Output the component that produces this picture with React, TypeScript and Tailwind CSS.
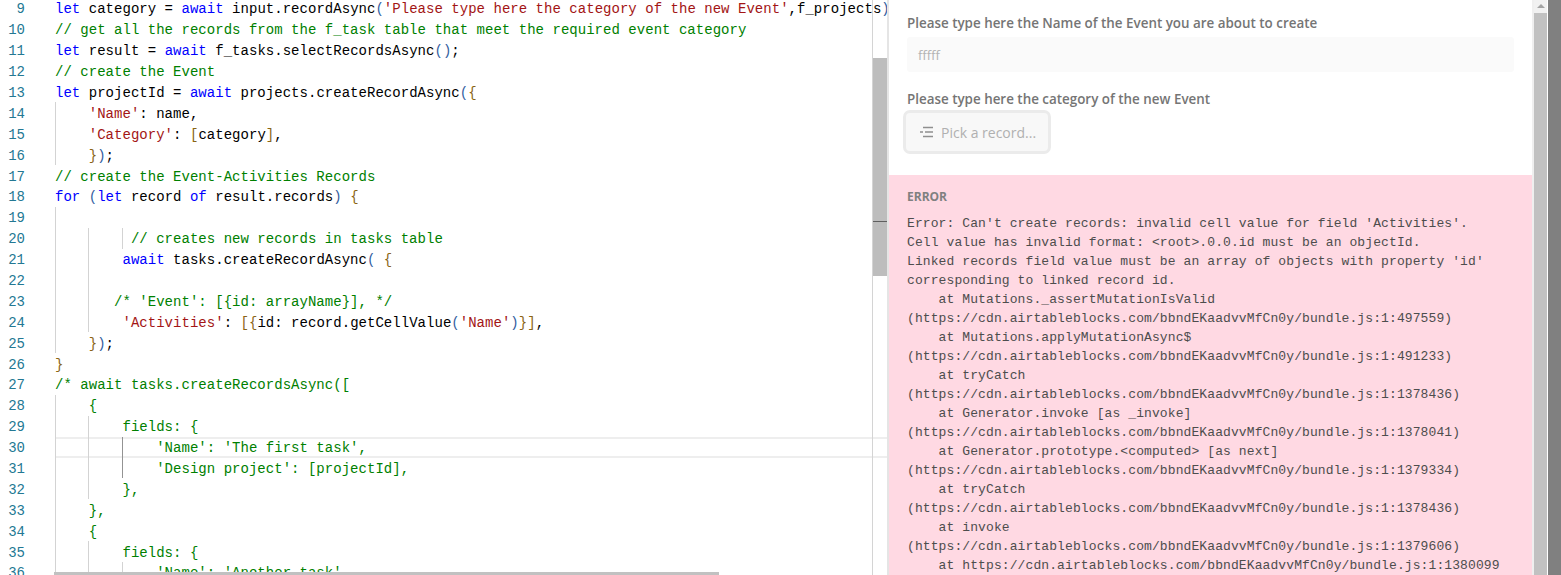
type Tok = [string, string];
type Row = { n: number; t: Tok[]; g?: string[] };

const colors: Record<string, string> = {
  k: "text-[#0000ff]",
  c: "text-[#008000]",
  s: "text-[#a31515]",
  x: "text-[#000000]",
  b: "text-[#8a6414]",
  p: "text-[#33609f]",
};

const guides: Record<string, string> = {
  a: "left-[55px] bg-[#d3d3d3]",
  b: "left-[88px] bg-[#d3d3d3]",
  c: "left-[122px] bg-[#d3d3d3]",
  d: "left-[122px] bg-[#939393]",
};

const rows: Row[] = [
  { n: 9, t: [["k", "let"], ["x", " category = "], ["k", "await"], ["x", " input.recordAsync"], ["p", "("], ["s", "'Please type here the category of the new Event'"], ["x", ",f_projects"], ["p", ")"]] },
  { n: 10, t: [["c", "// get all the records from the f_task table that meet the required event category"]] },
  { n: 11, t: [["k", "let"], ["x", " result = "], ["k", "await"], ["x", " f_tasks.selectRecordsAsync"], ["p", "("], ["p", ")"], ["x", ";"]] },
  { n: 12, t: [["c", "// create the Event"]] },
  { n: 13, t: [["k", "let"], ["x", " projectId = "], ["k", "await"], ["x", " projects.createRecordAsync"], ["p", "("], ["b", "{"]] },
  { n: 14, g: ["a"], t: [["x", "    "], ["s", "'Name'"], ["x", ": name,"]] },
  { n: 15, g: ["a"], t: [["x", "    "], ["s", "'Category'"], ["x", ": "], ["b", "["], ["x", "category"], ["b", "]"], ["x", ","]] },
  { n: 16, g: ["a"], t: [["x", "    "], ["b", "}"], ["p", ")"], ["x", ";"]] },
  { n: 17, t: [["c", "// create the Event-Activities Records"]] },
  { n: 18, t: [["k", "for"], ["x", " "], ["p", "("], ["k", "let"], ["x", " record "], ["k", "of"], ["x", " result.records"], ["p", ")"], ["x", " "], ["b", "{"]] },
  { n: 19, g: ["a"], t: [["x", " "]] },
  { n: 20, g: ["a", "b", "c"], t: [["c", "         // creates new records in tasks table"]] },
  { n: 21, g: ["a", "b"], t: [["x", "        "], ["k", "await"], ["x", " tasks.createRecordAsync"], ["p", "("], ["x", " "], ["b", "{"]] },
  { n: 22, g: ["a", "b"], t: [["x", " "]] },
  { n: 23, g: ["a", "b"], t: [["c", "       /* 'Event': [{id: arrayName}], */"]] },
  { n: 24, g: ["a", "b"], t: [["x", "        "], ["s", "'Activities'"], ["x", ": "], ["b", "[{"], ["x", "id: record.getCellValue"], ["p", "("], ["s", "'Name'"], ["p", ")"], ["b", "}]"], ["x", ","]] },
  { n: 25, g: ["a"], t: [["x", "    "], ["b", "}"], ["p", ")"], ["x", ";"]] },
  { n: 26, t: [["b", "}"]] },
  { n: 27, t: [["c", "/* await tasks.createRecordsAsync(["]] },
  { n: 28, g: ["a"], t: [["c", "    {"]] },
  { n: 29, g: ["a", "b"], t: [["c", "        fields: {"]] },
  { n: 30, g: ["a", "b", "d"], t: [["c", "            'Name': 'The first task',"]] },
  { n: 31, g: ["a", "b", "d"], t: [["c", "            'Design project': [projectId],"]] },
  { n: 32, g: ["a", "b"], t: [["c", "        },"]] },
  { n: 33, g: ["a"], t: [["c", "    },"]] },
  { n: 34, g: ["a"], t: [["c", "    {"]] },
  { n: 35, g: ["a", "b"], t: [["c", "        fields: {"]] },
  { n: 36, g: ["a", "b", "c"], t: [["c", "            'Name': 'Another task',"]] },
];

const errorLines = [
  "Error: Can't create records: invalid cell value for field 'Activities'.",
  "Cell value has invalid format: <root>.0.0.id must be an objectId.",
  "Linked records field value must be an array of objects with property 'id'",
  "corresponding to linked record id.",
  "    at Mutations._assertMutationIsValid",
  "(https://cdn.airtableblocks.com/bbndEKaadvvMfCn0y/bundle.js:1:497559)",
  "    at Mutations.applyMutationAsync$",
  "(https://cdn.airtableblocks.com/bbndEKaadvvMfCn0y/bundle.js:1:491233)",
  "    at tryCatch",
  "(https://cdn.airtableblocks.com/bbndEKaadvvMfCn0y/bundle.js:1:1378436)",
  "    at Generator.invoke [as _invoke]",
  "(https://cdn.airtableblocks.com/bbndEKaadvvMfCn0y/bundle.js:1:1378041)",
  "    at Generator.prototype.<computed> [as next]",
  "(https://cdn.airtableblocks.com/bbndEKaadvvMfCn0y/bundle.js:1:1379334)",
  "    at tryCatch",
  "(https://cdn.airtableblocks.com/bbndEKaadvvMfCn0y/bundle.js:1:1378436)",
  "    at invoke",
  "(https://cdn.airtableblocks.com/bbndEKaadvvMfCn0y/bundle.js:1:1379606)",
  "    at https://cdn.airtableblocks.com/bbndEKaadvvMfCn0y/bundle.js:1:1380099",
];

const sans = "font-['Open_Sans','Roboto',sans-serif]";

function CodeRow({ row }: { row: Row }) {
  const current = row.n === 30;
  return (
    <div className="relative flex h-[20.9px] leading-[20.9px]">
      {current && (
        <div className="absolute left-[55px] right-0 top-0 bottom-0 border-y-2 border-[#eeeeee]" />
      )}
      {(row.g ?? []).map((g) => (
        <div key={g} className={"absolute top-0 bottom-0 w-px " + guides[g]} />
      ))}
      <div className="w-[25px] shrink-0 pt-[1.4px] text-right text-[#237893]">{row.n}</div>
      <div className="relative ml-[30px] whitespace-pre pt-[1.4px] tracking-[0.03px]">
        {row.t.map((tok, i) => (
          <span key={i} className={colors[tok[0]]}>
            {tok[1]}
          </span>
        ))}
      </div>
    </div>
  );
}

function Editor() {
  return (
    <div className="relative h-full w-[887px] shrink-0 overflow-hidden bg-white font-['Liberation_Mono',monospace] text-[14px]">
      <div className="-mt-[2px]">
        {rows.map((r) => (
          <CodeRow key={r.n} row={r} />
        ))}
      </div>
      <div className="absolute right-0 top-0 bottom-0 w-[15px] border-l border-[#d4d4d4]">
        <div className="absolute left-0 right-0 top-[58px] h-[218px] bg-[#bdbdbd]" />
        <div className="absolute left-0 right-0 top-[221px] h-[1px] bg-[#5f5f5f]" />
      </div>
      <div className="absolute left-[54px] bottom-0 h-[3px] w-[665px] bg-[#c1c1c1]" />
    </div>
  );
}

function Form() {
  return (
    <div className={"flex h-full min-w-0 flex-1 flex-col overflow-hidden bg-white border-l-2 border-[#e5e5e5] " + sans}>
      <div className="flex h-[175px] shrink-0 flex-col px-[18px] pt-[15px]">
        <div className="h-[17px] whitespace-nowrap text-[13.4px] font-semibold leading-[17px] text-[#757575]">
          Please type here the Name of the Event you are about to create
        </div>
        <div className="mt-[5px] flex h-[35px] w-[607px] items-center rounded-[3px] bg-[#fafafa] pl-[11px] pt-[3px] text-[13px] text-[#b3b3b3]">
          fffff
        </div>
        <div className="mt-[19px] h-[17px] whitespace-nowrap text-[13.4px] font-semibold leading-[17px] text-[#757575]">
          Please type here the category of the new Event
        </div>
        <div className="-ml-[4px] mt-[2px] flex h-[44px] w-[148px] items-center rounded-[7px] border-[3px] border-[#ebebeb] bg-[#f8f8f8] pl-[14px] text-[14px] text-[#b0b0b0]">
          <svg width="14" height="12" viewBox="0 0 14 12" className="shrink-0" fill="none" stroke="#8f8f8f" strokeWidth="1.3">
            <path d="M3 1.500h10M0 6h3M5 6h8M3 10.500h10" />
          </svg>
          <span className="ml-[7px] whitespace-nowrap">Pick a record...</span>
        </div>
      </div>
      <div className="flex-1 bg-[#ffd9e3] px-[18px] pt-[14px]">
        <div className="h-[16px] text-[12px] font-bold leading-[16px] text-[#808080]">ERROR</div>
        <div className="mt-[9px] whitespace-pre font-['Liberation_Mono',monospace] text-[13px] leading-[19px] tracking-[0.1px] text-[#4d4d4d]">
          {errorLines.map((l, i) => (
            <div key={i}>{l}</div>
          ))}
        </div>
      </div>
    </div>
  );
}

function Scrollbar() {
  return (
    <div className="flex h-full w-[16px] shrink-0 flex-col border-l-2 border-[#efefef] bg-white">
      <div className="flex h-[13px] w-[13px] items-center justify-center bg-[#f1f1f1]">
        <div className="h-0 w-0 border-x-[4px] border-b-[4px] border-x-transparent border-b-[#a3a3a3]" />
      </div>
      <div className="h-full w-[13px] bg-[#c1c1c1]" />
    </div>
  );
}

export default function App() {
  return (
    <div className="flex h-[575px] w-[1561px] overflow-hidden">
      <Editor />
      <Form />
      <Scrollbar />
      <div className="h-full w-[13px] shrink-0 bg-[#808080]" />
    </div>
  );
}
